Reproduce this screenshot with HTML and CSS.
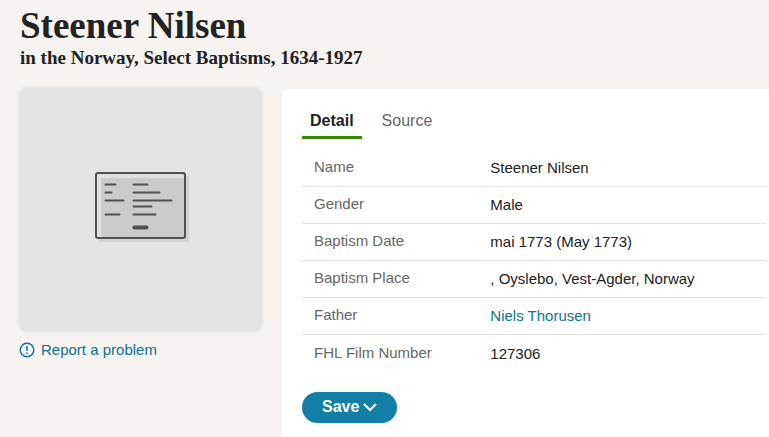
FILE: index.html
```html
<!DOCTYPE html>
<html lang="en">
<head>
<meta charset="utf-8">
<meta name="viewport" content="width=device-width, initial-scale=1">
<title>Steener Nilsen</title>
<link rel="stylesheet" href="styles.css">
</head>
<body>
<header class="page-header">
  <h1 class="title">Steener Nilsen</h1>
  <h2 class="subtitle">in the Norway, Select Baptisms, 1634-1927</h2>
</header>
<main class="record">
  <aside class="media">
    <a class="thumb" href="#" aria-label="View record">
      <svg class="thumb-icon" width="91" height="75" viewBox="0 0 91 75" fill="none" aria-hidden="true">
        <rect x="4" y="4" width="90" height="66" rx="2" fill="#d3d3d3"/>
        <rect x="1" y="1" width="89" height="65" rx="2" fill="#e0e0e0"/>
        <path d="M6 6H90V66H6Z" fill="#cbcbcb"/>
        <rect x="1" y="1" width="89" height="65" rx="2" stroke="#505050" stroke-width="2"/>
        <path d="M10.500 12.400H20.500M10.500 20.400H16.500M10.500 28.400H28.500M10.500 42.400H24.500M38.500 12.400H52.500M38.500 20.400H64.500M38.500 28.400H76.500M38.500 34.400H56.500M38.500 42.400H60.500" stroke="#505050" stroke-width="2" stroke-linecap="round"/>
        <path d="M39.500 55.500H51.500" stroke="#505050" stroke-width="4" stroke-linecap="round"/>
      </svg>
    </a>
    <a class="report" href="#">
      <svg width="16" height="16" viewBox="0 0 16 16" fill="none" stroke="currentColor" aria-hidden="true">
        <circle cx="8" cy="8" r="6.800" stroke-width="1.400"/>
        <path d="M8 4V9M8 10.500V12" stroke-width="1.500"/>
      </svg>
      <span>Report a problem</span>
    </a>
  </aside>
  <section class="panel">
    <div class="tabs" role="tablist">
      <button class="tab tab-active" type="button" role="tab" aria-selected="true">Detail</button>
      <button class="tab" type="button" role="tab" aria-selected="false">Source</button>
    </div>
    <table class="facts">
      <tbody>
        <tr><th scope="row">Name</th><td>Steener Nilsen</td></tr>
        <tr><th scope="row">Gender</th><td>Male</td></tr>
        <tr><th scope="row">Baptism Date</th><td>mai 1773 (May 1773)</td></tr>
        <tr><th scope="row">Baptism Place</th><td>, Oyslebo, Vest-Agder, Norway</td></tr>
        <tr><th scope="row">Father</th><td><a href="#">Niels Thorusen</a></td></tr>
        <tr><th scope="row">FHL Film Number</th><td>127306</td></tr>
      </tbody>
    </table>
    <button class="save" type="button">
      <span>Save</span>
      <svg width="14" height="10" viewBox="0 0 14 10" fill="none" stroke="currentColor" stroke-width="2" aria-hidden="true"><path d="M1 2L7 8L13 2"/></svg>
    </button>
  </section>
</main>
</body>
</html>
```
FILE: styles.css
```css
* {
  box-sizing: border-box;
}

body {
  margin: 0;
  min-height: 100vh;
  display: flex;
  flex-direction: column;
  background: #f6f3f0;
  color: #222;
  font-family: "Liberation Sans", Arial, sans-serif;
  font-size: 15px;
  line-height: 20px;
}

a {
  color: #11718f;
  text-decoration: none;
}

.page-header {
  padding: 6px 20px 18px;
  font-family: "Liberation Serif", "Times New Roman", serif;
}

.title,
.subtitle {
  margin: 0;
  font-weight: 700;
}

.title {
  font-size: 37px;
  line-height: 40px;
}

.subtitle {
  font-size: 19px;
  line-height: 24px;
}

.record {
  flex: 1;
  display: grid;
  grid-template-columns: 243px 1fr;
  gap: 20px;
  padding-left: 19px;
}

.thumb {
  display: flex;
  align-items: center;
  justify-content: center;
  aspect-ratio: 1;
  border-radius: 8px;
  background: #e4e4e4;
  box-shadow: 0 0 4px rgba(0, 0, 0, 0.1);
}

.thumb-icon {
  overflow: visible;
}

.report {
  display: flex;
  align-items: center;
  gap: 6px;
  margin-top: 9px;
}

.panel {
  margin-top: 1px;
  padding: 16px 3px 14px 20px;
  border-top-left-radius: 6px;
  background: #fff;
}

.tabs {
  display: flex;
  gap: 12px;
}

.tab {
  padding: 6px 8px 5px;
  border: 0;
  border-bottom: 3px solid transparent;
  background: none;
  color: #666;
  font: 16px/20px "Liberation Sans", Arial, sans-serif;
}

.tab-active {
  border-color: #338a00;
  color: #222;
  font-weight: 700;
}

.facts {
  width: 100%;
  margin-top: 11px;
  border-collapse: separate;
  border-spacing: 0;
}

.facts th,
.facts td {
  height: 37px;
  padding: 8px 12px;
  border-bottom: 1px solid #e3e3e3;
  text-align: left;
  vertical-align: middle;
}

.facts th {
  width: 38%;
  padding-top: 7px;
  padding-bottom: 9px;
  color: #666;
  font-weight: 400;
}

.facts tr:last-child > * {
  border-bottom: 0;
}

.save {
  display: flex;
  align-items: center;
  gap: 4px;
  margin-top: 20px;
  padding: 5px 20px 6px;
  border: 0;
  border-radius: 16px;
  background: #127fa6;
  color: #fff;
  font: 700 16px/20px "Liberation Sans", Arial, sans-serif;
}
```
